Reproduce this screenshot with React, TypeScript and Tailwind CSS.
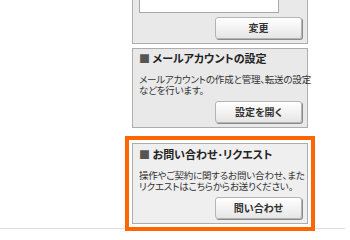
import React from "react";

const font = "font-['Noto_Sans_CJK_JP','Noto_Sans',sans-serif] [font-feature-settings:'palt']";

function PanelButton({ label }: { label: string }) {
  return (
    <div className="flex justify-end">
      <button className="h-[22px] w-[87px] rounded-[3px] border border-[#b4b4b4] bg-gradient-to-b from-white to-[#e6e6e6] text-[10px] font-bold leading-none text-[#333] shadow-[1px_1px_0_#8a8a8a]">
        {label}
      </button>
    </div>
  );
}

function InfoPanel({
  title,
  lines,
  button,
  className = "",
}: {
  title: string;
  lines: string[];
  button: string;
  className?: string;
}) {
  return (
    <div className={`border border-[#adadad] pl-[6px] pr-[5px] pb-[4px] ${className}`}>
      <div className="h-[14px] whitespace-nowrap text-[11px] font-bold leading-[14px] text-[#222]">
        <span className="text-[#555]">■</span> {title}
      </div>
      <div className="mt-[9px] whitespace-nowrap text-[9.5px] leading-[11px] tracking-[-0.2px] text-[#333]">
        {lines.map((l) => (
          <div key={l}>{l}</div>
        ))}
      </div>
      <div className="mt-[5px]">
        <PanelButton label={button} />
      </div>
    </div>
  );
}

export default function App() {
  return (
    <div className={`h-[240px] w-[350px] overflow-hidden bg-white ${font}`}>
      <div className="ml-[125px] w-[190px]">
        {/* password change panel, top cut off */}
        <div className="mx-[7px] -mt-[10px] border border-[#adadad] bg-[#e9e9e9] pl-[6px] pr-[5px] pt-[1px] pb-[4px]">
          <div className="h-[21px] w-[140px] border border-[#a8a8a8] bg-white" />
          <div className="mt-[4px]">
            <PanelButton label="変更" />
          </div>
        </div>

        <InfoPanel
          className="mx-[7px] mt-[4px] bg-[#e9e9e9] pt-[2px]"
          title="メールアカウントの設定"
          lines={["メールアカウントの作成と管理、転送の設定", "などを行います。"]}
          button="設定を開く"
        />

        <div className="relative z-10 -mb-[3px] mt-[8px] border-4 border-[#ff6600] bg-white p-[3px]">
          <InfoPanel
            className="bg-[#efefef] pt-[3px]"
            title="お問い合わせ･リクエスト"
            lines={["操作やご契約に関するお問い合わせ、また", "リクエストはこちらからお送りください。"]}
            button="問い合わせ"
          />
        </div>
      </div>
      <div className="mr-[5px] border-t border-[#dcdcdc]" />
    </div>
  );
}
